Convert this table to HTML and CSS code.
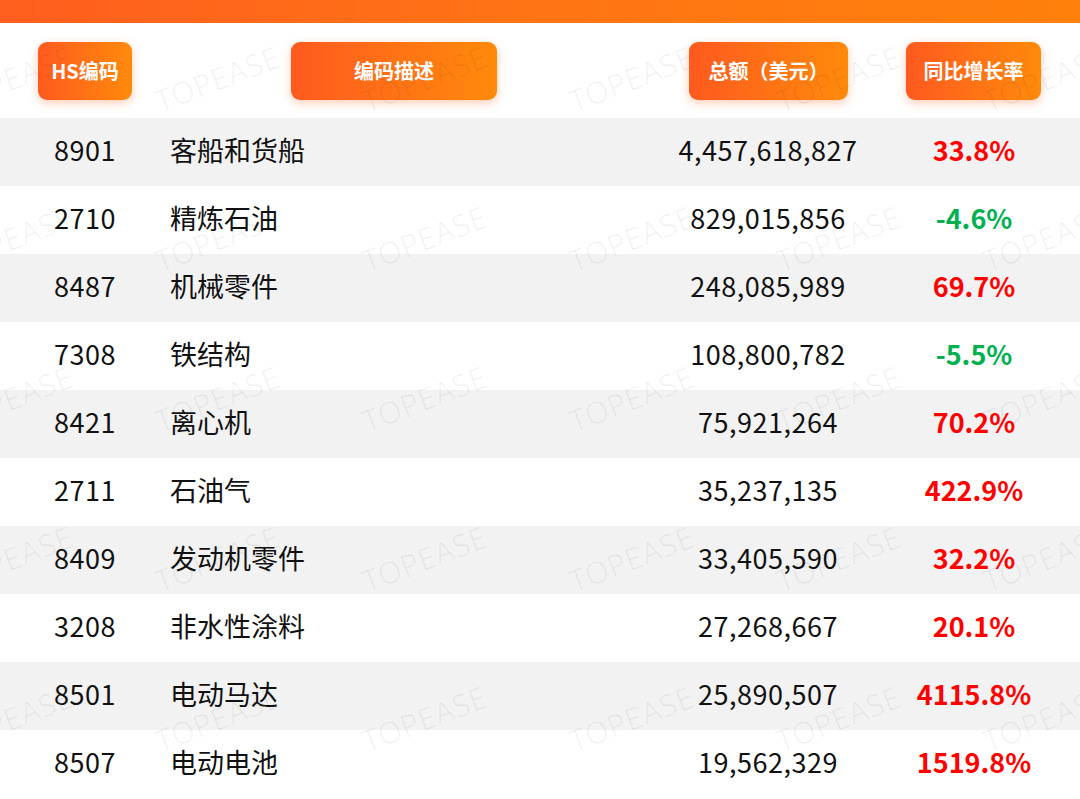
FILE: index.html
```html
<!DOCTYPE html>
<html lang="zh-CN">
<head>
<meta charset="utf-8">
<title>HS编码</title>
<link rel="stylesheet" href="styles.css">
</head>
<body>
<div class="page">
  <div class="topbar"></div>
  <div class="head">
    <div class="pill pill-code">HS编码</div>
    <div class="pill pill-desc">编码描述</div>
    <div class="pill pill-amt">总额（美元）</div>
    <div class="pill pill-pct">同比增长率</div>
  </div>
  <div class="table">
    <div class="row odd"><div class="c code">8901</div><div class="c desc">客船和货船</div><div class="c amt">4,457,618,827</div><div class="c pct up">33.8%</div></div>
    <div class="row"><div class="c code">2710</div><div class="c desc">精炼石油</div><div class="c amt">829,015,856</div><div class="c pct down">-4.6%</div></div>
    <div class="row odd"><div class="c code">8487</div><div class="c desc">机械零件</div><div class="c amt">248,085,989</div><div class="c pct up">69.7%</div></div>
    <div class="row"><div class="c code">7308</div><div class="c desc">铁结构</div><div class="c amt">108,800,782</div><div class="c pct down">-5.5%</div></div>
    <div class="row odd"><div class="c code">8421</div><div class="c desc">离心机</div><div class="c amt">75,921,264</div><div class="c pct up">70.2%</div></div>
    <div class="row"><div class="c code">2711</div><div class="c desc">石油气</div><div class="c amt">35,237,135</div><div class="c pct up">422.9%</div></div>
    <div class="row odd"><div class="c code">8409</div><div class="c desc">发动机零件</div><div class="c amt">33,405,590</div><div class="c pct up">32.2%</div></div>
    <div class="row"><div class="c code">3208</div><div class="c desc">非水性涂料</div><div class="c amt">27,268,667</div><div class="c pct up">20.1%</div></div>
    <div class="row odd"><div class="c code">8501</div><div class="c desc">电动马达</div><div class="c amt">25,890,507</div><div class="c pct up">4115.8%</div></div>
    <div class="row"><div class="c code">8507</div><div class="c desc">电动电池</div><div class="c amt">19,562,329</div><div class="c pct up">1519.8%</div></div>
  </div>
  <div class="watermarks" aria-hidden="true">
    <span>TOPEASE</span><span>TOPEASE</span><span>TOPEASE</span><span>TOPEASE</span><span>TOPEASE</span><span>TOPEASE</span>
    <span>TOPEASE</span><span>TOPEASE</span><span>TOPEASE</span><span>TOPEASE</span><span>TOPEASE</span><span>TOPEASE</span>
    <span>TOPEASE</span><span>TOPEASE</span><span>TOPEASE</span><span>TOPEASE</span><span>TOPEASE</span><span>TOPEASE</span>
    <span>TOPEASE</span><span>TOPEASE</span><span>TOPEASE</span><span>TOPEASE</span><span>TOPEASE</span><span>TOPEASE</span>
    <span>TOPEASE</span><span>TOPEASE</span><span>TOPEASE</span><span>TOPEASE</span><span>TOPEASE</span><span>TOPEASE</span>
  </div>
</div>
</body>
</html>
```
FILE: styles.css
```css
html, body {
  margin: 0;
  padding: 0;
  background: #ffffff;
}
body {
  font-family: "Noto Sans CJK SC", "Noto Sans", sans-serif;
  color: #111111;
}
.page {
  position: relative;
  width: 1080px;
  height: 799px;
  overflow: hidden;
  background: #ffffff;
}
.topbar {
  height: 23px;
  background: linear-gradient(90deg, #ff5e1e 0%, #ff7414 50%, #ff800b 100%);
}
.head {
  display: flex;
  align-items: center;
  height: 95px;
  padding-left: 38px;
  box-sizing: border-box;
}
.pill {
  height: 58px;
  display: flex;
  align-items: center;
  justify-content: center;
  border-radius: 9px;
  background: linear-gradient(90deg, #ff5a1f 0%, #ff8a0b 100%);
  color: #ffffff;
  font-weight: 700;
  font-size: 20px;
  box-shadow: 0 3px 10px rgba(255, 110, 40, 0.35);
}
.pill-code { width: 94px; }
.pill-desc { width: 206px; margin-left: 159px; }
.pill-amt { width: 159px; margin-left: 192px; }
.pill-pct { width: 135px; margin-left: 58px; }

.row {
  display: grid;
  grid-template-columns: 170px 430px 336px 76px 68px;
  height: 68px;
  box-sizing: border-box;
  padding-bottom: 5px;
  align-items: center;
  font-size: 27px;
  background: #ffffff;
}
.row.odd { background: #f2f2f2; }
.c {
  display: flex;
  justify-content: center;
  white-space: nowrap;
}
.c.desc { justify-content: flex-start; }
.c.code, .c.amt { letter-spacing: 0.5px; }
.pct { font-weight: 700; }
.up { color: #ff0000; }
.down { color: #00b050; }

.watermarks {
  position: absolute;
  top: -2px;
  left: -93px;
  display: grid;
  grid-template-columns: repeat(6, 207px);
  grid-auto-rows: 160px;
  pointer-events: none;
}
.watermarks span {
  display: flex;
  align-items: center;
  justify-content: center;
  font-family: "Noto Sans", "Open Sans", sans-serif;
  font-weight: 300;
  font-size: 30px;
  letter-spacing: 1px;
  color: rgba(0, 0, 0, 0.06);
  transform: rotate(-21deg);
}
```
